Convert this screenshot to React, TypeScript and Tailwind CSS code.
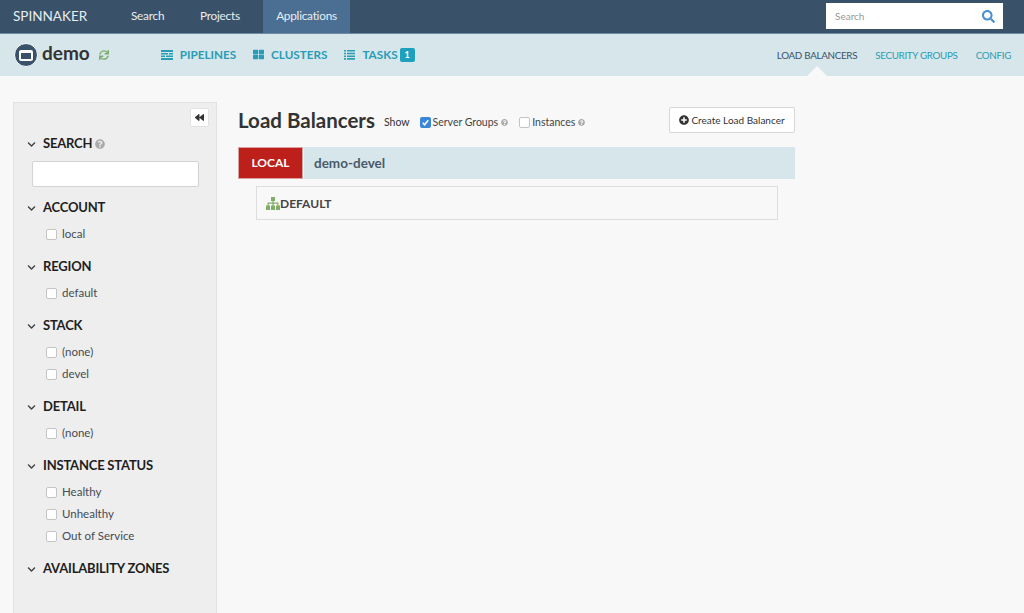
import { FaBackward, FaChevronDown, FaPlusCircle, FaQuestionCircle, FaSearch, FaSync, FaThLarge } from "react-icons/fa";

const filters = [
  { title: "ACCOUNT", options: ["local"] },
  { title: "REGION", options: ["default"] },
  { title: "STACK", options: ["(none)", "devel"] },
  { title: "DETAIL", options: ["(none)"] },
  { title: "INSTANCE STATUS", options: ["Healthy", "Unhealthy", "Out of Service"] },
  { title: "AVAILABILITY ZONES", options: [] as string[] },
];

function Box({ checked = false }: { checked?: boolean }) {
  if (checked) {
    return (
      <span className="flex h-[11px] w-[11px] shrink-0 items-center justify-center rounded-[2px] bg-[#3a87d8]">
        <svg width="9" height="9" viewBox="0 0 10 10" fill="none" stroke="white" strokeWidth="1.8">
          <path d="M2 5.2l2 2.2 4-5" />
        </svg>
      </span>
    );
  }
  return <span className="block h-[11px] w-[11px] shrink-0 rounded-[2px] border border-[#c4c4c4] bg-white" />;
}

function Heading({ title, help }: { title: string; help?: boolean }) {
  return (
    <div className="flex h-[20px] items-center">
      <FaChevronDown className="text-[9px] text-[#444]" />
      <span className="ml-[7px] text-[13px] font-bold tracking-[-0.2px] text-[#1e1e1e]">{title}</span>
      {help && <FaQuestionCircle className="ml-[3px] text-[10px] text-[#aaa]" />}
    </div>
  );
}

export default function App() {
  return (
    <div className="flex h-[613px] w-[1024px] flex-col overflow-hidden bg-[#f8f8f8] font-['Lato',sans-serif] text-[#333]">
      {/* Top nav */}
      <header className="flex h-[34px] items-stretch border-b border-[#6f8ba3] bg-[#3a5269] text-white">
        <div className="ml-[13px] w-[118px] text-[13.5px] leading-[33px] text-[#e8edf1]">SPINNAKER</div>
        <div className="w-[69px] text-[11.8px] leading-[32px] tracking-[-0.25px] text-[#e8edf1]">Search</div>
        <div className="w-[63px] text-[11.8px] leading-[32px] tracking-[-0.25px] text-[#e8edf1]">Projects</div>
        <div className="w-[87px] bg-[#4a6f93] text-center text-[11.8px] leading-[32px] tracking-[-0.25px] text-[#e8edf1]">Applications</div>
        <div className="ml-auto mr-[21px] mt-[3px] flex h-[26px] w-[177px] items-center justify-between bg-white px-[9px]">
          <span className="text-[10px] text-[#999]">Search</span>
          <FaSearch className="mr-[-1px] text-[13px] text-[#4a8fd0]" />
        </div>
      </header>

      {/* App sub nav */}
      <nav className="flex h-[42px] items-center bg-[#d6e6ea]">
        <div className="ml-[14px] flex h-[24px] w-[24px] items-center justify-center rounded-full border border-white bg-[#3a5269]">
          <span className="h-[11px] w-[14px] rounded-[2px] border-2 border-t-[3px] border-white" />
        </div>
        <span className="ml-[4px] mt-[-3px] text-[19px] font-bold text-[#333]">demo</span>
        <FaSync className="ml-[9px] text-[10px] text-[#7fae6b]" />
        <div className="ml-[52px] flex items-center text-[11.7px] font-bold text-[#2a9cb5]">
          <svg width="12" height="10" viewBox="0 0 12 10" fill="currentColor">
            <path d="M0 0h12v2H0zM0 3h7v1.500H0zM8 3h4v1.500H8zM0 5.500h4V7H0zM5 5.500h7V7H5zM0 8h12v2H0z" />
          </svg>
          <span className="ml-[7px]">PIPELINES</span>
          <FaThLarge className="ml-[17px] text-[11px]" />
          <span className="ml-[7px]">CLUSTERS</span>
          <svg className="ml-[17px]" width="11" height="10" viewBox="0 0 11 10" fill="currentColor">
            <path d="M0 0h2v1.600H0zM3 0h8v1.600H3zM0 2.700h2v1.600H0zM3 2.700h8v1.600H3zM0 5.400h2V7H0zM3 5.400h8V7H3zM0 8.100h2v1.600H0zM3 8.100h8v1.600H3z" />
          </svg>
          <span className="ml-[7px]">TASKS</span>
          <span className="ml-[2px] flex h-[14px] w-[15px] items-center justify-center rounded-[2px] bg-[#1fa0bd] text-[9px] text-white">1</span>
        </div>
        <div className="relative ml-auto mr-[13px] flex h-full items-center text-[9.8px] tracking-[-0.3px] text-[#2a9cb5]">
          <span className="text-[#3a5269]">LOAD BALANCERS</span>
          <span className="ml-[18px]">SECURITY GROUPS</span>
          <span className="ml-[18px]">CONFIG</span>
          <span className="absolute bottom-0 left-[30px] h-0 w-0 border-x-[10px] border-b-[10px] border-x-transparent border-b-[#f8f8f8]" />
        </div>
      </nav>

      <div className="flex min-h-0 flex-1 items-stretch pl-[13px] pt-[26px]">
        {/* Filter sidebar */}
        <aside className="relative w-[204px] border border-b-0 border-[#e2e2e2] bg-[#eeeeee] pl-[13px] pt-[31px]">
          <button className="absolute right-[7px] top-[5px] flex h-[19px] w-[19px] items-center justify-center rounded-[2px] border border-[#e2e2e2] bg-white text-[9px] text-[#333]">
            <FaBackward />
          </button>
          <Heading title="SEARCH" help />
          <div className="ml-[5px] mt-[7px] h-[26px] w-[167px] rounded-[2px] border border-[#d4d4d4] bg-white" />
          <div className="mt-[11px]">
            {filters.map((f) => (
              <section key={f.title} className="pb-[12px]">
                <Heading title={f.title} />
                <div className="pt-[5px]">
                  {f.options.map((o) => (
                    <div key={o} className="flex h-[22px] items-center pl-[19px] text-[11.5px] text-[#444c55]">
                      <Box />
                      <span className="ml-[5px]">{o}</span>
                    </div>
                  ))}
                </div>
              </section>
            ))}
          </div>
        </aside>

        {/* Main */}
        <main className="ml-[21px] w-[557px] pt-[5px]">
          <div className="flex h-[26px] items-center">
            <h1 className="text-[20.5px] font-bold text-[#333]">Load Balancers</h1>
            <span className="ml-[9px] mt-[5px] text-[10.5px]">Show</span>
            <span className="ml-[10px] mt-[5px] flex items-center text-[10.5px] text-[#444]">
              <Box checked />
              <span className="ml-[2px]">Server Groups</span>
              <FaQuestionCircle className="ml-[3px] text-[7px] text-[#aaa]" />
              <span className="ml-[11px]"><Box /></span>
              <span className="ml-[2px]">Instances</span>
              <FaQuestionCircle className="ml-[3px] text-[7px] text-[#aaa]" />
            </span>
            <button className="ml-auto flex h-[26px] w-[126px] items-center justify-center rounded-[2px] border border-[#d8d8d8] bg-white text-[10px] text-[#333]">
              <FaPlusCircle className="mr-[2px] text-[10px]" />
              Create Load Balancer
            </button>
          </div>

          <div className="mt-[14px] flex h-[32px] items-stretch">
            <div className="w-[65px] border border-[#d9a0a0] bg-[#bd201a] text-center text-[12px] font-bold leading-[30px] text-white">LOCAL</div>
            <div className="ml-[1px] flex-1 bg-[#d6e6ea] pl-[10px] text-[13.5px] font-bold leading-[32px] text-[#4a5a6a]">demo-devel</div>
          </div>

          <div className="ml-[18px] mr-[17px] mt-[7px] flex h-[34px] items-center border border-[#dddddd] pl-[9px] pt-[1px] text-[12px] font-bold text-[#444]">
            <svg width="14" height="13" viewBox="0 0 14 13" fill="#7fae6b">
              <path d="M5 0h4v4H5zM6.400 4h1.200v2.500H6.400zM1.500 5.500h11v1.200h-11zM1.500 6h1.200v3H1.500zM6.400 6h1.200v3H6.400zM11.300 6h1.200v3h-1.200zM0 8.500h4V13H0zM5 8.500h4V13H5zM10 8.500h4V13h-4z" />
            </svg>
            DEFAULT
          </div>
        </main>
      </div>
    </div>
  );
}
